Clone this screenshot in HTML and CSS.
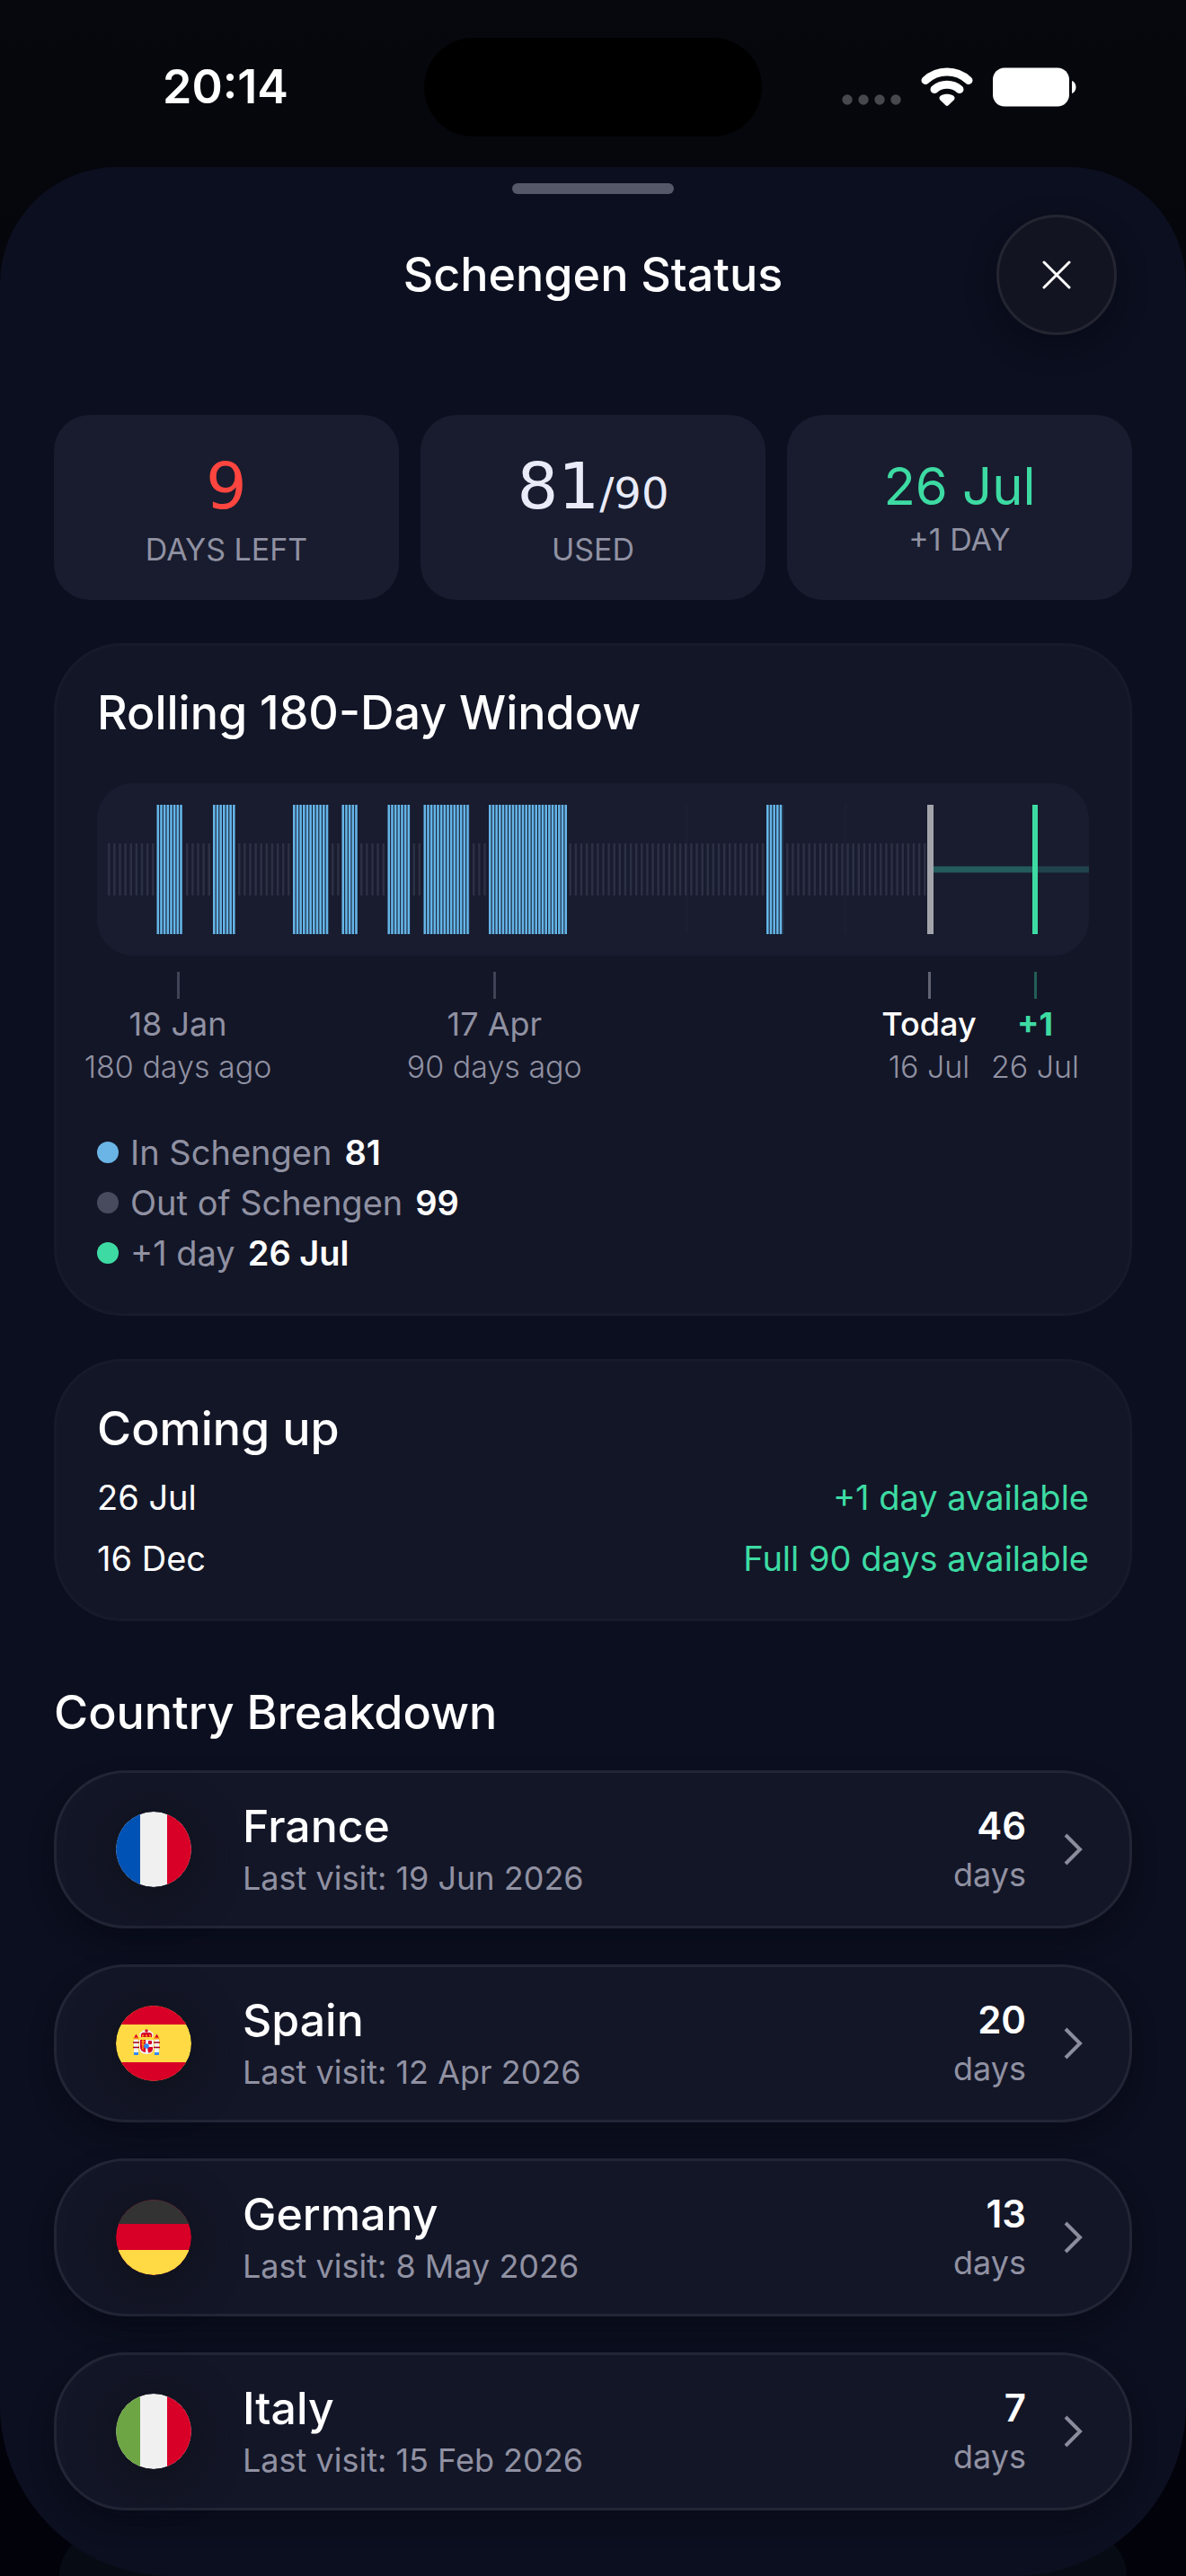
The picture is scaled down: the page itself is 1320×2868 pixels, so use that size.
FILE: index.html
```html
<!DOCTYPE html>
<html lang="en">
<head>
  <meta charset="UTF-8">
  <meta name="viewport" content="width=device-width, initial-scale=1.0">
  <title>Schengen Status</title>
  <link rel="stylesheet" href="styles.css">
</head>
<body>
  <div class="status-bar">
    <div class="time">20:14</div>
    <div class="island"></div>
    <div class="status-icons">
      <svg class="icon-signal" viewBox="0 0 66 12" aria-hidden="true">
        <circle cx="6" cy="6" r="5.7"/><circle cx="24" cy="6" r="5.7"/><circle cx="42" cy="6" r="5.7"/><circle cx="60" cy="6" r="5.7"/>
      </svg>
      <svg class="icon-wifi" viewBox="0 0 58 44" aria-hidden="true">
        <path d="M5 14.500C18.500 1.800 39.500 1.800 53 14.500" fill="none" stroke="#fff" stroke-width="9" stroke-linecap="round"/>
        <path d="M15 24.500C23 17.500 35 17.500 43 24.500" fill="none" stroke="#fff" stroke-width="9" stroke-linecap="round"/>
        <path d="M21.500 36.500C19.700 34.700 20.500 32.500 22 31.500C26 29 32 29 36 31.500C37.500 32.500 38.300 34.700 36.500 36.500L30.500 42.300Q29 43.500 27.500 42.300Z" fill="#fff"/>
      </svg>
      <svg class="icon-battery" viewBox="0 0 94 44" aria-hidden="true">
        <rect x="0" y="0.500" width="85" height="43" rx="13" fill="#fff"/>
        <path d="M88 15C94 17 94 27 88 29Z" fill="#fff"/>
      </svg>
    </div>
  </div>

  <main class="sheet">
    <div class="handle"></div>

    <header class="sheet-header">
      <h1>Schengen Status</h1>
      <button class="close" type="button" aria-label="Close">
        <svg viewBox="0 0 32 32" aria-hidden="true"><path d="M2 2L30 30M30 2L2 30"/></svg>
      </button>
    </header>

    <section class="stats">
      <div class="stat">
        <div class="value red">9</div>
        <div class="caption">DAYS LEFT</div>
      </div>
      <div class="stat">
        <div class="value">81<span class="total">/90</span></div>
        <div class="caption">USED</div>
      </div>
      <div class="stat">
        <div class="value date">26 Jul</div>
        <div class="caption">+1 DAY</div>
      </div>
    </section>

    <section class="card">
      <h2>Rolling 180-Day Window</h2>

      <!-- one dash per day: tall blue = in Schengen, short grey = out -->
      <svg class="timeline" viewBox="0 0 1104 192" preserveAspectRatio="none" role="img" aria-label="Days in Schengen over the last 180 days">
        <g class="months">
          <path d="M656 24V168M833 24V168"/>
        </g>
        <g class="days-out">
          <path d="M12 96H66"/>
          <path d="M99 96H128"/>
          <path d="M157 96H216"/>
          <path d="M261 96H271"/>
          <path d="M293 96H322"/>
          <path d="M351.500 96H362"/>
          <path d="M418 96H434"/>
          <path d="M525.500 96H744"/>
          <path d="M767 96H925"/>
        </g>
        <g class="days-in">
          <path d="M66.500 96H95"/>
          <path d="M129 96H154"/>
          <path d="M218 96H257.500"/>
          <path d="M272.500 96H290.500"/>
          <path d="M323.500 96H349"/>
          <path d="M363.500 96H415"/>
          <path d="M436 96H523.500"/>
          <path d="M745 96H763.500"/>
        </g>
        <path class="ahead" d="M928 96H1044"/>
        <path class="ahead far" d="M1044 96H1104"/>
        <path class="today" d="M927.500 24V168"/>
        <path class="next" d="M1044 24V168"/>
      </svg>

      <div class="axis">
        <div class="mark start">18 Jan<small>180 days ago</small></div>
        <div class="mark middle">17 Apr<small>90 days ago</small></div>
        <div class="mark now">Today<small>16 Jul</small></div>
        <div class="mark plus">+1<small>26 Jul</small></div>
      </div>

      <ul class="legend">
        <li><span class="dot blue"></span>In Schengen <strong>81</strong></li>
        <li><span class="dot grey"></span>Out of Schengen <strong>99</strong></li>
        <li><span class="dot green"></span>+1 day <strong>26 Jul</strong></li>
      </ul>
    </section>

    <section class="card">
      <h2>Coming up</h2>
      <div class="event"><span>26 Jul</span><span class="gain">+1 day available</span></div>
      <div class="event"><span>16 Dec</span><span class="gain">Full 90 days available</span></div>
    </section>

    <h2 class="section-title">Country Breakdown</h2>

    <nav class="countries">
      <a class="country" href="#france">
        <svg class="flag" viewBox="0 0 84 84" aria-hidden="true">
          <clipPath id="round"><circle cx="42" cy="42" r="42"/></clipPath>
          <g clip-path="url(#round)">
            <rect width="84" height="84" fill="#f0f0f0"/>
            <rect width="27" height="84" fill="#0052b4"/>
            <rect x="57" width="27" height="84" fill="#d80027"/>
          </g>
        </svg>
        <div class="info">
          <div class="name">France</div>
          <div class="visit">Last visit: 19 Jun 2026</div>
        </div>
        <div class="count"><strong>46</strong>days</div>
        <svg class="chevron" viewBox="0 0 22 38" aria-hidden="true"><path d="M3 3L19 19L3 35"/></svg>
      </a>

      <a class="country" href="#spain">
        <svg class="flag" viewBox="0 0 84 84" aria-hidden="true">
          <g clip-path="url(#round)">
            <rect width="84" height="84" fill="#ffda44"/>
            <rect width="84" height="21" fill="#d80027"/>
            <rect y="63" width="84" height="21" fill="#d80027"/>
          </g>
          <!-- coat of arms -->
          <g>
            <rect x="20" y="36" width="5" height="17" fill="#f0f0f0"/>
            <rect x="43" y="36" width="5" height="17" fill="#f0f0f0"/>
            <path d="M22.500 31.500L25 36H20ZM45.500 31.500L48 36H43Z" fill="#d80027"/>
            <path d="M19.500 36.500H25.500M42.500 36.500H48.500" stroke="#ff9811" stroke-width="2"/>
            <path d="M19 41H26M19 46.500H26M42 41H49M42 46.500H49" stroke="#a2001d" stroke-width="1.500"/>
            <path d="M20 53.500H25M43 53.500H48" stroke="#338af3" stroke-width="3"/>
            <path d="M26 38H42V47Q42 54 34 54Q26 54 26 47Z" fill="#f0f0f0"/>
            <path d="M27 38H33V52Q27 51 27 46Z" fill="#d80027"/>
            <path d="M28.500 40H32M28.500 43H32M30 38V49" stroke="#ff9811" stroke-width="1.500"/>
            <path d="M35 46H41V48Q41 52 36 52.500Z" fill="#d80027"/>
            <rect x="36" y="39" width="4" height="4" rx="1" fill="#d80027"/>
            <circle cx="34" cy="45" r="2.800" fill="#338af3"/>
            <path d="M27 35Q25 30 29 29Q30 27 34 27Q38 27 39 29Q43 30 41 35Z" fill="#f0f0f0"/>
            <path d="M28 35Q27 31 30 30H38Q41 31 40 35Z" fill="#d80027"/>
            <path d="M29 33.500H39" stroke="#ff9811" stroke-width="2" stroke-dasharray="2 2"/>
            <circle cx="34" cy="28" r="1.800" fill="#d80027"/>
          </g>
        </svg>
        <div class="info">
          <div class="name">Spain</div>
          <div class="visit">Last visit: 12 Apr 2026</div>
        </div>
        <div class="count"><strong>20</strong>days</div>
        <svg class="chevron" viewBox="0 0 22 38" aria-hidden="true"><path d="M3 3L19 19L3 35"/></svg>
      </a>

      <a class="country" href="#germany">
        <svg class="flag" viewBox="0 0 84 84" aria-hidden="true">
          <g clip-path="url(#round)">
            <rect width="84" height="84" fill="#d80027"/>
            <rect width="84" height="27" fill="#333333"/>
            <rect y="56" width="84" height="28" fill="#ffda44"/>
          </g>
        </svg>
        <div class="info">
          <div class="name">Germany</div>
          <div class="visit">Last visit: 8 May 2026</div>
        </div>
        <div class="count"><strong>13</strong>days</div>
        <svg class="chevron" viewBox="0 0 22 38" aria-hidden="true"><path d="M3 3L19 19L3 35"/></svg>
      </a>

      <a class="country" href="#italy">
        <svg class="flag" viewBox="0 0 84 84" aria-hidden="true">
          <g clip-path="url(#round)">
            <rect width="84" height="84" fill="#f0f0f0"/>
            <rect width="27" height="84" fill="#6da544"/>
            <rect x="57" width="27" height="84" fill="#d80027"/>
          </g>
        </svg>
        <div class="info">
          <div class="name">Italy</div>
          <div class="visit">Last visit: 15 Feb 2026</div>
        </div>
        <div class="count"><strong>7</strong>days</div>
        <svg class="chevron" viewBox="0 0 22 38" aria-hidden="true"><path d="M3 3L19 19L3 35"/></svg>
      </a>
    </nav>
  </main>
</body>
</html>
```
FILE: styles.css
```css
* {
  box-sizing: border-box;
}

body {
  margin: 0;
  font-family: Inter, "Liberation Sans", sans-serif;
  font-size: 36px;
  line-height: 44px;
  color: #ffffff;
  background: linear-gradient(#07080d, #05060b 300px, #02020b);
}

h1, h2 {
  margin: 0;
  font-size: 52px;
  line-height: 60px;
  font-weight: 500;
}

/* status bar */
.status-bar {
  display: grid;
  grid-template-columns: 1fr 376px 1fr;
  align-items: center;
  height: 186px;
  padding-top: 8px;
}

.time {
  padding-left: 30px;
  text-align: center;
  font-size: 52px;
  font-weight: 600;
}

.island {
  height: 110px;
  border-radius: 55px;
  background: #000000;
}

.status-icons {
  display: flex;
  align-items: center;
  justify-content: flex-end;
  padding-right: 121px;
}

.icon-signal {
  width: 66px;
  height: 12px;
  margin: 28px 22px 0 0;
  fill: #47484d;
}

.icon-wifi {
  width: 58px;
  height: 44px;
  margin-right: 22px;
}

.icon-battery {
  width: 94px;
  height: 44px;
}

/* sheet */
.sheet {
  position: relative;
  padding: 18px 60px 73px;
  border-radius: 130px 130px 190px 190px;
  background: #0c0f1f;
}

/* card of the screen underneath, peeking out at the bottom */
.sheet::before {
  content: "";
  position: absolute;
  z-index: -1;
  left: 66px;
  right: 66px;
  bottom: 0;
  height: 50px;
  border-radius: 50px 50px 0 0;
  background: #070c14;
}

.handle {
  width: 180px;
  height: 12px;
  margin: 0 auto;
  border-radius: 6px;
  background: #555869;
}

.sheet-header {
  display: grid;
  grid-template-columns: 1fr auto 1fr;
  align-items: center;
  padding: 23px 17px 0;
}

.sheet-header h1 {
  grid-column: 2;
}

.close {
  display: flex;
  align-items: center;
  justify-content: center;
  justify-self: end;
  width: 134px;
  height: 134px;
  padding: 0;
  border: 3px solid #232531;
  border-radius: 50%;
  background: #131421;
  box-shadow: 0 12px 30px rgba(4, 8, 20, 0.5);
  cursor: pointer;
}

.close svg {
  width: 32px;
  height: 32px;
  fill: none;
  stroke: #ffffff;
  stroke-width: 3;
  stroke-linecap: round;
}

/* stats */
.stats {
  display: grid;
  grid-template-columns: repeat(3, 1fr);
  gap: 24px;
  margin-top: 89px;
}

.stat {
  display: flex;
  flex-direction: column;
  align-items: center;
  justify-content: center;
  gap: 8px;
  height: 206px;
  border-radius: 40px;
  background: #181c2e;
}

.value {
  font-family: "DejaVu Sans", sans-serif;
  font-size: 72px;
  line-height: 86px;
  color: #e9ebf8;
}

.total {
  font-size: 48px;
  line-height: 1;
}

.red {
  color: #ff453f;
}

.date {
  font-family: Inter, sans-serif;
  font-size: 58px;
  line-height: 64px;
  color: #3ddba3;
}

.caption {
  font-size: 34px;
  line-height: 40px;
  color: #9091a2;
}

/* cards */
.card {
  margin-top: 48px;
  padding: 48px;
  border-radius: 76px;
  background: #131627;
  box-shadow: inset 0 0 0 3px #161a2a;
}

.timeline {
  display: block;
  width: 100%;
  height: 192px;
  margin-top: 48px;
  border-radius: 40px;
  background: #181c2e;
}

.months {
  stroke: #1b1f31;
  stroke-width: 3;
}

.days-out {
  stroke: #2d3044;
  stroke-width: 58;
  stroke-dasharray: 2.5 3.62;
}

.days-in {
  stroke: #64b5e8;
  stroke-width: 144;
  stroke-dasharray: 2.6 1.07;
}

.today {
  stroke: #a3a4ab;
  stroke-width: 7;
}

.next {
  stroke: #3ddba3;
  stroke-width: 6;
}

.ahead {
  stroke: #245b5c;
  stroke-width: 7;
}

.far {
  stroke: #20424c;
}

.axis {
  display: grid;
  grid-template-columns: 216px 136fr 216px 315fr 120px 116px;
  margin: 18px 2px 0 -18px;
  color: #9091a2;
}

.mark {
  display: flex;
  flex-direction: column;
  align-items: center;
  white-space: nowrap;
}

.mark::before {
  content: "";
  width: 3px;
  height: 30px;
  margin-bottom: 6px;
  background: #404356;
}

.mark small {
  margin-top: 6px;
  font-size: 34px;
  line-height: 40px;
  font-weight: 300;
  color: #9091a2;
}

.middle {
  grid-column: 3;
}

.now {
  grid-column: 5;
  font-weight: 500;
  color: #ffffff;
}

.now::before {
  background: #626473;
}

.plus {
  font-weight: 700;
  color: #3ddba3;
}

.plus::before {
  background: #235e57;
}

.legend {
  display: grid;
  gap: 12px;
  margin: 53px 0 0;
  padding: 0;
  list-style: none;
  font-size: 38px;
  color: #9091a2;
}

.legend li {
  display: flex;
  align-items: center;
}

.legend strong {
  margin-left: 14px;
  font-weight: 600;
  color: #ffffff;
}

.dot {
  width: 24px;
  height: 24px;
  margin-right: 13px;
  border-radius: 50%;
}

.blue { background: #6ab5e6; }
.grey { background: #484b5e; }
.green { background: #3ddba3; }

.event {
  display: flex;
  justify-content: space-between;
  margin-top: 24px;
  font-size: 38px;
}

.gain {
  color: #3ddba3;
}

/* countries */
.section-title {
  margin-top: 72px;
}

.countries {
  display: grid;
  gap: 40px;
  margin-top: 34px;
}

.country {
  display: flex;
  align-items: center;
  height: 176px;
  padding: 0 52px 0 66px;
  border: 3px solid #222535;
  border-radius: 80px;
  background: #131627;
  box-shadow: 0 14px 24px rgba(5, 8, 20, 0.5);
  color: #9091a2;
  text-decoration: none;
}

.flag {
  width: 84px;
  height: 84px;
  margin-right: 57px;
  border-radius: 50%;
  box-shadow: 0 8px 36px 16px #11131f;
}

.info {
  flex: 1;
}

.name {
  margin-bottom: 8px;
  font-size: 50px;
  line-height: 56px;
  font-weight: 500;
  color: #ffffff;
}

.count {
  text-align: right;
}

.count strong {
  display: block;
  margin-bottom: 8px;
  font-size: 42px;
  line-height: 48px;
  font-weight: 600;
  color: #ffffff;
}

.chevron {
  width: 22px;
  height: 38px;
  margin-left: 41px;
  fill: none;
  stroke: #8b8d9d;
  stroke-width: 4;
}

@media (max-width: 900px) {
  h1, h2 { font-size: 36px; }
  .stats { grid-template-columns: 1fr; }
}
```
